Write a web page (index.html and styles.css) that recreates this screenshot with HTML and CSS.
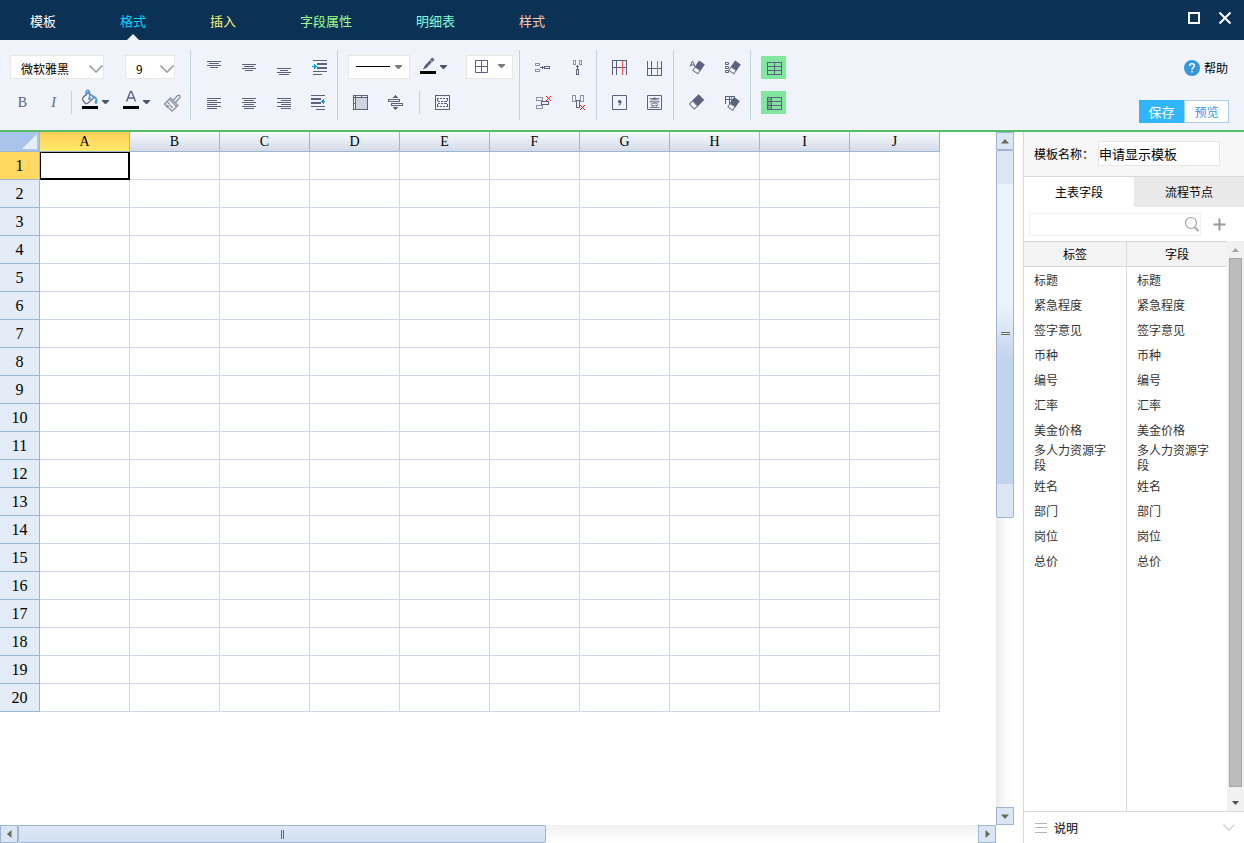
FILE: index.html
```html
<!DOCTYPE html>
<html lang="zh-CN">
<head>
<meta charset="utf-8">
<title>模板</title>
<link rel="stylesheet" href="styles.css">
</head>
<body>
<header class="topbar">
  <nav class="menu">
    <a href="#" class="menu-item">模板</a>
    <a href="#" class="menu-item menu-format active">格式</a>
    <a href="#" class="menu-item menu-insert">插入</a>
    <a href="#" class="menu-item menu-field">字段属性</a>
    <a href="#" class="menu-item menu-detail">明细表</a>
    <a href="#" class="menu-item menu-style">样式</a>
  </nav>
  <div class="window-controls">
    <button class="win" aria-label="最大化"><svg width="14" height="14" viewBox="0 0 14 14"><rect x="2" y="2" width="10" height="10" fill="none" stroke="#fff" stroke-width="2"/></svg></button>
    <button class="win" aria-label="关闭"><svg width="14" height="14" viewBox="0 0 14 14"><path d="M1.500 1.500L12.500 12.500M12.500 1.500L1.500 12.500" fill="none" stroke="#fff" stroke-width="2"/></svg></button>
  </div>
</header>

<section class="ribbon">
  <div class="group group-font">
    <div class="row row-selects">
      <span class="select select-font"><select aria-label="字体"><option>微软雅黑</option></select><svg width="14" height="8" viewBox="0 0 14 8"><path d="M0.500 0.500L7 7L13.500 0.500" fill="none" stroke="#a0a0a0" stroke-width="1.600"/></svg></span>
      <span class="select select-size"><select aria-label="字号"><option>9</option></select><svg width="14" height="8" viewBox="0 0 14 8"><path d="M0.500 0.500L7 7L13.500 0.500" fill="none" stroke="#a0a0a0" stroke-width="1.600"/></svg></span>
    </div>
    <div class="row row-text">
      <button class="tool letter">B</button>
      <button class="tool letter italic">I</button>
      <span class="divider"></span>
      <button class="tool split" aria-label="填充颜色"><svg width="35" height="35" viewBox="0 0 35 35"><path d="M5 12.500L10 7.500L16 12.500L9.500 18.500Q8 19 7 18L5 15.500Q4 14 5 12.500Z" fill="#f7f8fc" stroke="#6b6f8a" stroke-width="1.300"/><path d="M8 11V6.500Q9.500 4 11.500 6.500V13" fill="none" stroke="#3c9ee6" stroke-width="1.300"/><path d="M13 10Q19 10.500 19.500 15.500Q19.500 19.500 17.500 19Q16 18 17.500 14.500Q16 12 13 10Z" fill="#4a9fe4"/><circle cx="11.500" cy="13.500" r="1.500" fill="#4a9fe4"/><rect x="4" y="21" width="16" height="3" fill="#000"/><path d="M24 15h7v1l-3 3h-1l-3-3z" fill="#4d556f"/></svg></button>
      <button class="tool split" aria-label="文字颜色"><svg width="35" height="35" viewBox="0 0 35 35"><path d="M6.500 16.500L10.500 6.500h1L15.500 16.500M8 13h6" fill="none" stroke="#5c6180" stroke-width="1.400"/><rect x="3" y="21" width="16" height="3" fill="#000"/><path d="M23 15h7v1l-3 3h-1l-3-3z" fill="#4d556f"/></svg></button>
      <button class="tool brush" aria-label="格式刷"><svg width="24" height="35" viewBox="0 0 24 35"><g fill="none" stroke="#8b90a5" stroke-width="1.300"><path d="M2.500 19L8.500 13L16 20.500L10 26L7.500 23.500L5.500 22.500Z" fill="#f7f8fc"/><path d="M7.500 14.500L14.500 21.500M5.500 17L7.500 19.500M8 20L10.500 23M5 20L7 22"/><path d="M11 15.500L15.500 10.500Q18.500 9.500 18 12.500L13.500 17.500"/></g></svg></button>
    </div>
  </div>

  <div class="group group-align">
    <div class="row">
      <button class="tool" aria-label="顶端对齐"><svg class="px" width="35" height="35" viewBox="0 0 35 35"><path d="M10 11.500h14M12 13.500h10M10 15.500h14M13 17.500h8"/></svg></button>
      <button class="tool" aria-label="垂直居中"><svg class="px" width="35" height="35" viewBox="0 0 35 35"><path d="M10 14.500h14M12 16.500h10M10 18.500h14M13 20.500h8"/></svg></button>
      <button class="tool" aria-label="底端对齐"><svg class="px" width="35" height="35" viewBox="0 0 35 35"><path d="M10 18.500h14M13 20.500h8M10 22.500h14M12 24.500h10"/></svg></button>
      <button class="tool" aria-label="增加缩进"><svg class="px" width="35" height="35" viewBox="0 0 35 35"><path d="M11 10.500h14M11 21.500h14M11 24.500h9"/><path d="M15 14h10M15 18h10" stroke-width="2"/><path d="M10 16h2v-2l3 2.500l-3 2.500v-2h-2z" fill="#009bff" stroke="none"/></svg></button>
    </div>
    <div class="row">
      <button class="tool" aria-label="左对齐"><svg class="px" width="35" height="35" viewBox="0 0 35 35"><path d="M10 13.500h14M10 15.500h10M10 17.500h14M10 19.500h10M10 21.500h14M10 23.500h10"/></svg></button>
      <button class="tool" aria-label="居中"><svg class="px" width="35" height="35" viewBox="0 0 35 35"><path d="M10 13.500h14M12 15.500h10M10 17.500h14M12 19.500h10M10 21.500h14M12 23.500h10"/></svg></button>
      <button class="tool" aria-label="右对齐"><svg class="px" width="35" height="35" viewBox="0 0 35 35"><path d="M10 13.500h14M14 15.500h10M10 17.500h14M14 19.500h10M10 21.500h14M14 23.500h10"/></svg></button>
      <button class="tool" aria-label="减少缩进"><svg class="px" width="35" height="35" viewBox="0 0 35 35"><path d="M9 10.500h14M9 21.500h14M14 24.500h9"/><path d="M9 14h10M9 18h10" stroke-width="2"/><path d="M23 16h-1v-2l-3 2.500l3 2.500v-2h1z" fill="#009bff" stroke="none"/></svg></button>
    </div>
  </div>

  <div class="group group-border">
    <div class="row row-lines">
      <button class="boxed box-line" aria-label="线型"><svg width="60" height="22" viewBox="0 0 60 22"><path d="M7 10.500h34" stroke="#000"/><path d="M46 9h7v1l-3 3h-1l-3-3z" fill="#7b7b7b"/></svg></button>
      <button class="tool pen" aria-label="线条颜色"><svg width="44" height="35" viewBox="0 0 44 35"><path d="M7 19.500L8.500 16L14 10L16 12L10.500 18Z" fill="#5c6180"/><path d="M14.500 9.500L16.500 8L18 9.500L16.500 11.500Z" fill="#6e7290" stroke="#5c6180"/><rect x="4" y="21" width="16" height="3" fill="#000"/><path d="M24 15h7v1l-3 3h-1l-3-3z" fill="#4d556f"/></svg></button>
      <button class="boxed box-grid" aria-label="边框"><svg width="45" height="22" viewBox="0 0 45 22"><path d="M8.500 4.500h12v12h-12zM14.500 4.500v12M8.500 10.500h12" fill="none" stroke="#5c6180"/><path d="M31 8h7v1l-3 3h-1l-3-3z" fill="#7b7b7b"/></svg></button>
    </div>
    <div class="row row-cells">
      <button class="tool" aria-label="背景"><svg class="px" width="35" height="35" viewBox="0 0 35 35"><rect x="12" y="12" width="12" height="12" fill="#d0d3e0" stroke="none"/><path d="M10.500 10.500h14v14h-14zM12.500 10v15M10 12.500h15M18.500 10v2M10 18.500h2"/></svg></button>
      <button class="tool" aria-label="行高"><svg class="px" width="35" height="35" viewBox="0 0 35 35"><path d="M10.500 14.500h11v2h-11zM13.500 18.500h11v2h-11z"/><path d="M15 13l2.500-3l2.500 3zM15 22l2.500 3l2.500-3z" fill="#5c6180" stroke="none"/></svg></button>
      <span class="divider"></span>
      <button class="tool" aria-label="选区"><svg class="px" width="35" height="35" viewBox="0 0 35 35"><path d="M10.500 10.500h14v14h-14z"/><path d="M12 13.500h2M15 13.500h2M18 13.500h2M21 13.500h2M12 21.500h2M15 21.500h2M18 21.500h2M21 21.500h2M13 16.500h2M16 16.500h2M19 16.500h3M13 18.500h2M16 18.500h2M19 18.500h3"/><path d="M12.500 13v3M22.500 13v3M12.500 19v3M22.500 19v3"/></svg></button>
    </div>
  </div>

  <div class="group group-pair">
    <div class="row">
      <button class="tool" aria-label="合并行"><svg class="px" width="35" height="35" viewBox="0 0 35 35"><path d="M10.500 13.500h4v2h-4zM10.500 19.500h4v2h-4z" stroke="#8f93a9"/><path d="M19.500 16.500h5v2h-5zM15 17.500h5M17.500 16v3"/></svg></button>
      <button class="tool" aria-label="合并列"><svg class="px" width="35" height="35" viewBox="0 0 35 35"><path d="M13.500 10.500h2v4h-2zM19.500 10.500h2v4h-2z" stroke="#8f93a9"/><path d="M16.500 19.500h2v5h-2zM17.500 15v5M16 16.500h3"/></svg></button>
    </div>
    <div class="row">
      <button class="tool" aria-label="拆分行"><svg class="px" width="35" height="35" viewBox="0 0 35 35"><path d="M11.500 12.500h6v3h-6zM11.500 20.500h6v3h-6z" stroke="#8f93a9"/><path d="M16.500 16.500h7v3h-7z" fill="#f0f3fa"/><path d="M21 11l5 5M26 11l-5 5" stroke="#ff1a1a"/></svg></button>
      <button class="tool" aria-label="拆分列"><svg class="px" width="35" height="35" viewBox="0 0 35 35"><path d="M12.500 10.500h3v6h-3zM20.500 10.500h3v6h-3z" stroke="#8f93a9"/><path d="M16.500 15.500h3v7h-3z" fill="#f0f3fa"/><path d="M20 20l5 5M25 20l-5 5" stroke="#e02020"/></svg></button>
    </div>
  </div>

  <div class="group group-pair">
    <div class="row">
      <button class="tool" aria-label="插入列"><svg class="px" width="35" height="35" viewBox="0 0 35 35"><path d="M10 10.500h15M10 17.500h15M10.500 10v15M14.500 10v15M24.500 10v15"/><path d="M20.500 11v14" stroke="#ff5252"/></svg></button>
      <button class="tool" aria-label="插入行"><svg class="px" width="35" height="35" viewBox="0 0 35 35"><path d="M10 25.500h15M10 18.500h15M10.500 11v15M14.500 11v15M24.500 11v15"/><path d="M20.500 11v14" stroke="#ff5252"/></svg></button>
    </div>
    <div class="row">
      <button class="tool" aria-label="千分位"><svg width="35" height="35" viewBox="0 0 35 35"><path d="M10.500 10.500h14v14h-14z" fill="none" stroke="#5c6180"/><path d="M17 15Q20 14.500 19.500 17.500Q19 20 16.500 20.500L16.500 19.700Q18 19 18 18.300Q16 18.500 16 16.700Q16 15.200 17 15Z" fill="#5c6180"/></svg></button>
      <button class="tool" aria-label="大写金额"><svg width="35" height="35" viewBox="0 0 35 35"><path d="M10.500 10.500h14v14h-14z" fill="none" stroke="#5c6180"/><text x="17.500" y="21.500" text-anchor="middle" class="cap">壹</text></svg></button>
    </div>
  </div>

  <div class="group group-pair">
    <div class="row">
      <button class="tool" aria-label="清除格式"><svg width="35" height="35" viewBox="0 0 35 35"><path d="M11 16.500L13.200 11.500h0.600L16 16.500M12 15h3" fill="none" stroke="#5c6180"/><g transform="translate(19.500 17.500) rotate(35)"><path d="M-3.500 -6h7v7.500h-7z" fill="#5c6180"/><path d="M-3 1.500h6v4h-6z" fill="#f8f9fd" stroke="#6f7390"/></g></svg></button>
      <button class="tool" aria-label="清除内容"><svg width="35" height="35" viewBox="0 0 35 35"><path d="M11.500 12.500h3v2h-3zM11.500 16.500h3v2h-3zM11.500 20.500h3v2h-3z" fill="none" stroke="#5c6180"/><g transform="translate(20.500 17.500) rotate(35)"><path d="M-3.500 -6h7v7.500h-7z" fill="#5c6180"/><path d="M-3 1.500h6v4h-6z" fill="#f8f9fd" stroke="#6f7390"/></g></svg></button>
    </div>
    <div class="row">
      <button class="tool" aria-label="清除"><svg width="35" height="35" viewBox="0 0 35 35"><g transform="translate(17.500 17) rotate(45)"><path d="M-4 -7h8v9h-8z" fill="#5c6180"/><path d="M-3.500 2h7v4.500h-7z" fill="#f8f9fd" stroke="#6f7390"/></g></svg></button>
      <button class="tool" aria-label="清除全部"><svg width="35" height="35" viewBox="0 0 35 35"><path d="M11 11.500h10M11 14.500h10M11.500 11v8M15.500 11v8M20.500 11v4" fill="none" stroke="#5c6180"/><path d="M17.500 12v5" stroke="#ff5252"/><g transform="translate(19.500 19) rotate(35)"><path d="M-3.500 -6h7v7.500h-7z" fill="#5c6180"/><path d="M-3 1.500h6v4h-6z" fill="#f8f9fd" stroke="#6f7390"/></g></svg></button>
    </div>
  </div>

  <div class="group group-toggle">
    <div class="row"><button class="toggle" aria-label="网格" aria-pressed="true"><svg class="px" width="25" height="23" viewBox="0 0 25 23"><path d="M6.500 6.500h14v12h-14zM6 10.500h15M6 14.500h15M13.500 6v13"/></svg></button></div>
    <div class="row"><button class="toggle" aria-label="表头" aria-pressed="true"><svg class="px" width="25" height="23" viewBox="0 0 25 23"><rect x="7" y="7" width="3" height="12" fill="#6faf8c" stroke="none"/><path d="M6.500 6.500h14v12h-14zM6 10.500h15M6 14.500h15M10.500 6v13"/></svg></button></div>
  </div>

  <div class="actions">
    <a href="#" class="help"><svg width="16" height="16" viewBox="0 0 16 16"><circle cx="8" cy="8" r="8" fill="#3398e0"/><path d="M5.700 6Q5.700 3.800 8 3.800Q10.300 3.800 10.300 5.800Q10.300 7 9 7.800Q8 8.400 8 9.800M8 11v1.500" fill="none" stroke="#fff" stroke-width="1.500"/></svg>帮助</a>
    <div class="save-row"><button class="save">保存</button><button class="preview">预览</button></div>
  </div>
</section>

<main class="workspace">
  <section class="sheet">
    <div class="sheet-view"><table class="grid" id="grid"></table></div>
    <div class="vbar">
      <button class="bar-btn" aria-label="向上"><svg width="8" height="5" viewBox="0 0 8 5"><path d="M0 4.500L4 0L8 4.500z" fill="#6b6b50"/></svg></button>
      <div class="vtrack"><div class="vthumb"></div></div>
      <button class="bar-btn" aria-label="向下"><svg width="8" height="5" viewBox="0 0 8 5"><path d="M0 0.500L4 5L8 0.500z" fill="#6b6b50"/></svg></button>
    </div>
    <div class="hbar">
      <button class="bar-btn" aria-label="向左"><svg width="5" height="8" viewBox="0 0 5 8"><path d="M4.500 0L0 4L4.500 8z" fill="#6b6b50"/></svg></button>
      <div class="htrack"><div class="hthumb"></div></div>
      <button class="bar-btn" aria-label="向右"><svg width="5" height="8" viewBox="0 0 5 8"><path d="M0.500 0L5 4L0.500 8z" fill="#6b6b50"/></svg></button>
    </div>
  </section>

  <aside class="side">
    <div class="name-row"><label for="tpl-name">模板名称：</label><input id="tpl-name" type="text" value="申请显示模板"></div>
    <div class="tabs"><button class="tab tab-on">主表字段</button><button class="tab">流程节点</button></div>
    <div class="search-row">
      <div class="search"><input type="text" aria-label="搜索字段"><svg width="16" height="17" viewBox="0 0 16 17"><circle cx="7" cy="7" r="5.500" fill="none" stroke="#a3a3a3" stroke-width="1.200"/><path d="M11 11.500L14.500 15" stroke="#a3a3a3" stroke-width="1.800"/></svg></div>
      <button class="add" aria-label="添加"><svg width="13" height="13" viewBox="0 0 13 13"><path d="M6.500 0.500v12M0.500 6.500h12" stroke="#999" stroke-width="2"/></svg></button>
    </div>
    <div class="fields">
      <div class="fields-body">
        <table class="field-table">
          <thead><tr><th>标签</th><th>字段</th></tr></thead>
          <tbody>
            <tr><td>标题</td><td>标题</td></tr>
            <tr><td>紧急程度</td><td>紧急程度</td></tr>
            <tr><td>签字意见</td><td>签字意见</td></tr>
            <tr><td>币种</td><td>币种</td></tr>
            <tr><td>编号</td><td>编号</td></tr>
            <tr><td>汇率</td><td>汇率</td></tr>
            <tr><td>美金价格</td><td>美金价格</td></tr>
            <tr><td>多人力资源字段</td><td>多人力资源字段</td></tr>
            <tr><td>姓名</td><td>姓名</td></tr>
            <tr><td>部门</td><td>部门</td></tr>
            <tr><td>岗位</td><td>岗位</td></tr>
            <tr><td>总价</td><td>总价</td></tr>
          </tbody>
        </table>
      </div>
      <div class="side-bar">
        <button class="side-btn" aria-label="向上"><svg width="7" height="4" viewBox="0 0 7 4"><path d="M0 4L3.500 0L7 4z" fill="#a3a3a3"/></svg></button>
        <div class="side-track"><div class="side-thumb"></div></div>
        <button class="side-btn" aria-label="向下"><svg width="7" height="4" viewBox="0 0 7 4"><path d="M0 0L3.500 4L7 0z" fill="#505050"/></svg></button>
      </div>
    </div>
    <button class="notes"><svg width="12" height="10" viewBox="0 0 12 10"><path d="M0 0.500h12M0 4.500h12M0 9.500h12" stroke="#b5b5b5"/></svg><span>说明</span><svg class="notes-arrow" width="12" height="7" viewBox="0 0 12 7"><path d="M0.500 0.500L6 6L11.500 0.500" fill="none" stroke="#d0d0d0" stroke-width="1.300"/></svg></button>
  </aside>
</main>
<script src="grid.js"></script>
</body>
</html>
```
FILE: styles.css
```css
* { box-sizing: border-box; }
body {
  margin: 0;
  height: 100vh;
  display: flex;
  flex-direction: column;
  overflow: hidden;
  font: 12px/16px "Noto Sans CJK SC", sans-serif;
  color: #000;
  background: #fff;
}
button, input, select { font: inherit; color: inherit; margin: 0; }
button { padding: 0; border: 0; background: none; cursor: pointer; }
a { text-decoration: none; color: inherit; }
svg { display: block; }

/* top menu */
.topbar {
  flex: none;
  height: 40px;
  display: flex;
  justify-content: space-between;
  background: #0b3154;
}
.menu { display: flex; gap: 64px; padding-left: 30px; }
.menu-item { position: relative; font-size: 13px; line-height: 42px; height: 40px; color: #fff; white-space: nowrap; }
.menu-format { color: #00d8ff; }
.menu-insert { color: #fff67b; }
.menu-field { color: #9bff8f; }
.menu-detail { color: #7dffdb; }
.menu-style { color: #ffcba8; }
.menu-item.active::after {
  content: "";
  position: absolute;
  left: 50%;
  bottom: 0;
  margin-left: -6px;
  border: 6px solid transparent;
  border-top: 0;
  border-bottom-color: #f0f3fa;
}
.window-controls { display: flex; align-items: center; gap: 17px; padding: 0 12px 4px 0; }

/* ribbon */
.ribbon {
  flex: none;
  display: flex;
  align-items: flex-start;
  padding: 10px 0 7px;
  border-bottom: 2px solid #54bd6c;
  background: #f0f3fa;
}
.group { flex: none; border-right: 1px solid #c0d5dd; }
.row { display: flex; align-items: center; height: 35px; }
.tool { width: 35px; height: 35px; }
.px { fill: none; stroke: #5c6180; shape-rendering: crispEdges; }
.divider { width: 1px; height: 23px; background: #c0d5dd; }
.group-font { width: 191px; }
.row-selects { gap: 21px; padding: 0 0 1px 10px; }
.select { position: relative; display: flex; height: 24px; }
.select-font { width: 94px; }
.select-size { width: 50px; }
.select select {
  width: 100%;
  appearance: none;
  padding: 4px 0 0 10px;
  border: 1px solid #e8e7e2;
  border-radius: 0;
  background: #fff;
}
.select svg { position: absolute; right: 1px; top: 10px; pointer-events: none; }
.row-text { padding-left: 7px; }
.row-text .letter { width: 31px; font-family: "Liberation Serif", serif; font-size: 14px; color: #5c6180; }
.row-text .italic { font-style: italic; }
.row-text .divider { margin: 0 6px 0 2px; }
.row-text .split { margin-right: 7px; }
.row-text .brush { width: 24px; }
.group-align { width: 147px; padding-left: 6px; }
.group-border { width: 182px; }
.row-lines { gap: 6px; padding: 0 0 1px 10px; }
.row-cells { padding-left: 5px; }
.row-cells .divider { margin: 0 5px 0 6px; }
.boxed { height: 24px; border: 1px solid #e8e7e2; background: #fff; }
.box-line { width: 62px; }
.box-grid { width: 47px; }
.pen { width: 44px; }
.group-pair { width: 77px; padding-left: 5px; }
.cap { font: 11px "Noto Sans CJK SC", sans-serif; fill: #5c6180; }
.group-toggle { border: 0; padding-left: 10px; }
.toggle { width: 25px; height: 23px; background: #82e79e; }
.actions { margin-left: auto; padding-right: 15px; display: flex; flex-direction: column; align-items: flex-end; }
.help { display: flex; align-items: center; gap: 4px; height: 35px; padding-right: 1px; }
.save-row { display: flex; height: 23px; margin-top: 15px; }
.save, .preview { width: 45px; line-height: 21px; }
.save { background: #30b5ff; color: #fff; font-size: 13px; }
.preview { border: 1px solid #a9cdf4; background: #fff; color: #2d94f5; }

/* worksheet */
.workspace { flex: 1; min-height: 0; display: flex; }
.sheet {
  flex: 1;
  min-width: 0;
  display: grid;
  grid-template-columns: minmax(0, 1fr) 18px;
  grid-template-rows: minmax(0, 1fr) 18px;
  margin-right: 9px;
}
.sheet-view { overflow: hidden; }
.grid { table-layout: fixed; border-collapse: separate; border-spacing: 0; width: 940px; }
.grid th, .grid td { padding: 0; }
.grid th { font-family: "Liberation Serif", serif; font-weight: normal; }
.col-head, .corner { height: 20px; border-right: 1px solid #9eb6ce; border-bottom: 1px solid #9eb6ce; }
.col-head { width: 90px; font-size: 14px; line-height: 18px; background: linear-gradient(#f8fafc, #d3dbe9); }
.col-head.selected { background: linear-gradient(#ffcf55, #ffea6b); }
.corner { width: 40px; background: #a9c4e9; }
.corner svg { margin-left: auto; }
.row-head { height: 28px; font-size: 16px; line-height: 18px; background: #e4ecf7; border-right: 1px solid #9eb6ce; border-bottom: 1px solid #9eb6ce; }
.row-head.selected { background: #ffd961; }
.cell { border-right: 1px solid #d0d7e5; border-bottom: 1px solid #d0d7e5; }
.cell.selected { box-shadow: inset 1px 1px #000; border-right: 2px solid #000; border-bottom: 2px solid #000; }

/* worksheet scroll bars */
.bar-btn {
  flex: none;
  width: 18px;
  height: 18px;
  display: flex;
  align-items: center;
  justify-content: center;
  border: 1px solid #9eb6d4;
  background: #dae6f4;
}
.vbar { display: flex; flex-direction: column; background: linear-gradient(90deg, #ececec, #fbfbfb 60%, #fff); }
.vtrack { flex: 1; }
.vthumb {
  height: 56%;
  border: 1px solid #9eb6d4;
  border-radius: 2px;
  background:
    linear-gradient(#6b6b50 0 1px, #dce7f3 1px 2px, #6b6b50 2px 3px) center / 9px 3px no-repeat,
    linear-gradient(#dae6f4 0 9%, #ebf4fc 9% 42%, #c2d3ec 57% 91%, #dae6f4 91%);
}
.hbar { display: flex; background: linear-gradient(#f0f0f0, #fff); }
.htrack { flex: 1; }
.hthumb {
  width: 55%;
  height: 18px;
  border: 1px solid #9eb6d4;
  border-radius: 2px;
  background:
    linear-gradient(90deg, #6b6b50 0 1px, #dce7f3 1px 2px, #6b6b50 2px 3px) center / 3px 9px no-repeat,
    linear-gradient(#dce8f6, #d1dff0);
}

/* field panel */
.side { flex: none; width: 221px; display: flex; flex-direction: column; border-left: 1px solid #d9d9d9; }
.name-row { display: flex; align-items: center; height: 45px; padding: 0 0 1px 10px; background: #f7f7f7; border-bottom: 1px solid #d9d9d9; }
.name-row label { width: 64px; white-space: nowrap; }
.name-row input { width: 122px; height: 25px; padding: 0; font-size: 13px; border: 1px solid #e8e7e2; background: #fff; }
.tabs { display: flex; }
.tab { flex: 1; height: 30px; background: #e9e9e9; }
.tab-on { background: #fff; }
.search-row { display: flex; align-items: center; height: 34px; padding-left: 5px; gap: 12px; }
.search { display: flex; align-items: center; width: 172px; height: 23px; border: 1px solid #f0f0f0; }
.search input { flex: 1; min-width: 0; height: 21px; border: 0; padding: 0 4px; background: none; }
.fields { flex: 1; min-height: 0; display: flex; }
.fields-body {
  flex: 1;
  border-top: 1px solid #d9d9d9;
  background: linear-gradient(#d9d9d9, #d9d9d9) 102px 0 / 1px 100% no-repeat;
}
.field-table { width: 100%; table-layout: fixed; border-collapse: separate; border-spacing: 0; }
.field-table th { height: 25px; padding: 0; font-weight: normal; background: #f3f3f3; border-bottom: 1px solid #d9d9d9; }
.field-table th:first-child { width: 103px; border-right: 1px solid #d9d9d9; }
.field-table td { height: 25px; padding: 0 17px 1px 10px; color: #333; line-height: 15px; }
.side-bar { display: flex; flex-direction: column; width: 17px; background: #f1f1f1; }
.side-btn { height: 17px; display: flex; align-items: center; justify-content: center; }
.side-track { flex: 1; padding: 0 2px 7px; }
.side-thumb { height: 100%; border: 1px solid #a8a8a8; background: #bcbcbc; }
.notes { display: flex; align-items: center; gap: 7px; height: 32px; padding: 0 9px 0 11px; border-top: 1px solid #d9d9d9; color: #333; }
.notes span { font-weight: 500; }
.notes-arrow { margin-left: auto; }
```
FILE: grid.js
```js
const table = document.getElementById("grid");
const columns = "ABCDEFGHIJ".split("");
const rowCount = 20;

function add(parent, tag, className, text) {
  const el = document.createElement(tag);
  if (className) el.className = className;
  if (text) el.textContent = text;
  parent.appendChild(el);
  return el;
}

const head = add(table, "tr");
add(head, "th", "corner").innerHTML =
  '<svg width="17" height="15" viewBox="0 0 17 15"><path d="M15 0V15H0Z" fill="#e6edf6"/></svg>';
columns.forEach((name, c) => add(head, "th", c === 0 ? "col-head selected" : "col-head", name));

for (let r = 1; r <= rowCount; r++) {
  const row = add(table, "tr");
  add(row, "th", r === 1 ? "row-head selected" : "row-head", String(r));
  columns.forEach((_, c) => add(row, "td", r === 1 && c === 0 ? "cell selected" : "cell"));
}
```
